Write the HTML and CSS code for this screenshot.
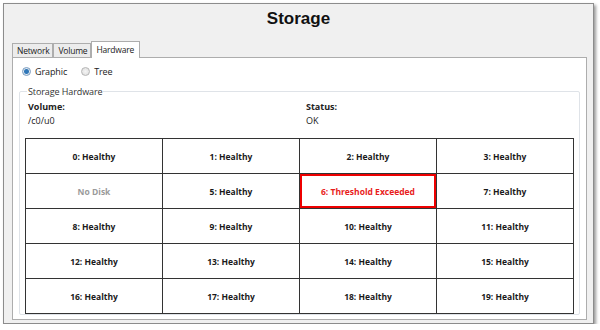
FILE: index.html
```html
<!DOCTYPE html>
<html lang="en">
<head>
    <meta charset="UTF-8">
    <title>Storage</title>
    <link rel="stylesheet" href="styles.css">
</head>
<body>
    <div class="window">
        <div class="title">Storage</div>

        <div class="tabs">
            <div class="tab">Network</div>
            <div class="tab">Volume</div>
            <div class="tab active">Hardware</div>
        </div>

        <div class="panel">
            <div class="view-mode">
                <label class="radio"><span class="dot checked"></span>Graphic</label>
                <label class="radio"><span class="dot"></span>Tree</label>
            </div>

            <fieldset class="group">
                <legend>Storage Hardware</legend>
                <div class="info">
                    <div class="field">
                        <div class="label">Volume:</div>
                        <div class="value">/c0/u0</div>
                    </div>
                    <div class="field">
                        <div class="label">Status:</div>
                        <div class="value">OK</div>
                    </div>
                </div>

                <div class="disks">
                    <div class="disk">0: Healthy</div>
                    <div class="disk">1: Healthy</div>
                    <div class="disk">2: Healthy</div>
                    <div class="disk">3: Healthy</div>
                    <div class="disk empty">No Disk</div>
                    <div class="disk">5: Healthy</div>
                    <div class="disk alert">6: Threshold Exceeded</div>
                    <div class="disk">7: Healthy</div>
                    <div class="disk">8: Healthy</div>
                    <div class="disk">9: Healthy</div>
                    <div class="disk">10: Healthy</div>
                    <div class="disk">11: Healthy</div>
                    <div class="disk">12: Healthy</div>
                    <div class="disk">13: Healthy</div>
                    <div class="disk">14: Healthy</div>
                    <div class="disk">15: Healthy</div>
                    <div class="disk">16: Healthy</div>
                    <div class="disk">17: Healthy</div>
                    <div class="disk">18: Healthy</div>
                    <div class="disk">19: Healthy</div>
                </div>
            </fieldset>
        </div>
    </div>
</body>
</html>
```

FILE: styles.css
```css
body {
    margin: 0;
    padding: 3px 6px 0 3px;
    background: #fff;
    font-family: "Open Sans", "Noto Sans", sans-serif;
    color: #222;
}

.window {
    height: 321px;
    background: #f0f0f0;
    border: 1px solid #8c8c8c;
    box-shadow: 2px 2px 3px #9a9a9a;
    display: flex;
    flex-direction: column;
    box-sizing: border-box;
}

.title {
    height: 37px;
    text-align: center;
    font-family: "Liberation Sans", Arial, sans-serif;
    font-weight: bold;
    font-size: 17px;
    line-height: 30px;
    color: #111;
}

.tabs {
    display: flex;
    align-items: flex-end;
    margin-left: 8px;
    height: 16px;
}

.tab {
    font-size: 8.5px;
    letter-spacing: -0.2px;
    height: 13px;
    line-height: 13px;
    padding: 0 3px 0 4px;
    border: 1px solid #adadad;
    border-bottom: none;
    margin-right: 0;
    background: #ececec;
    color: #222;
}

.tab.active {
    height: 16px;
    line-height: 15px;
    padding: 0 5px 0 4px;
    background: #fff;
    position: relative;
    z-index: 1;
    margin-bottom: -1px;
}

.panel {
    flex: 1;
    background: #fff;
    border: 1px solid #adadad;
    margin: 0 6px 3px 8px;
    padding: 5px 6px 4px 6px;
    display: flex;
    flex-direction: column;
}

.view-mode {
    display: flex;
    gap: 14px;
    font-size: 9px;
    letter-spacing: -0.1px;
    padding-left: 3px;
    height: 16px;
    align-items: center;
}

.radio {
    display: flex;
    align-items: center;
    gap: 4px;
}

.dot {
    width: 7px;
    height: 7px;
    border-radius: 50%;
    border: 1px solid #b5b5b5;
    background: radial-gradient(circle, #f4f4f4, #dcdcdc);
}

.dot.checked {
    background: radial-gradient(circle, #2f77b8 0 2px, #dfe8f0 3px);
    border-color: #7a9cc0;
}

.group {
    flex: 1;
    margin: 6px 0 0 0;
    padding: 0 5px 0 5px;
    border: 1px solid #dfe3e8;
    border-radius: 2px;
}

.group legend {
    font-size: 9px;
    letter-spacing: -0.1px;
    padding: 0 1px;
    margin-left: 2px;
    color: #333;
}

.info {
    display: grid;
    grid-template-columns: 278px 1fr;
    padding: 2px 3px 0;
    height: 38px;
    font-size: 9px;
}

.label {
    font-weight: bold;
    line-height: 13px;
}

.value {
    line-height: 15px;
}

.disks {
    display: grid;
    grid-template-columns: repeat(4, 1fr);
    grid-auto-rows: 35px;
    border-top: 1.5px solid #333;
    border-left: 1.5px solid #333;
}

.disk {
    display: flex;
    align-items: center;
    justify-content: center;
    border-right: 1.5px solid #333;
    border-bottom: 1.5px solid #333;
    font-size: 8.5px;
    font-weight: bold;
    color: #1a1a1a;
}

.disk.empty {
    color: #9a9a9a;
}

.disk.alert {
    color: #e81c1c;
    box-shadow: inset 0 0 0 2px #e00;
}
```
